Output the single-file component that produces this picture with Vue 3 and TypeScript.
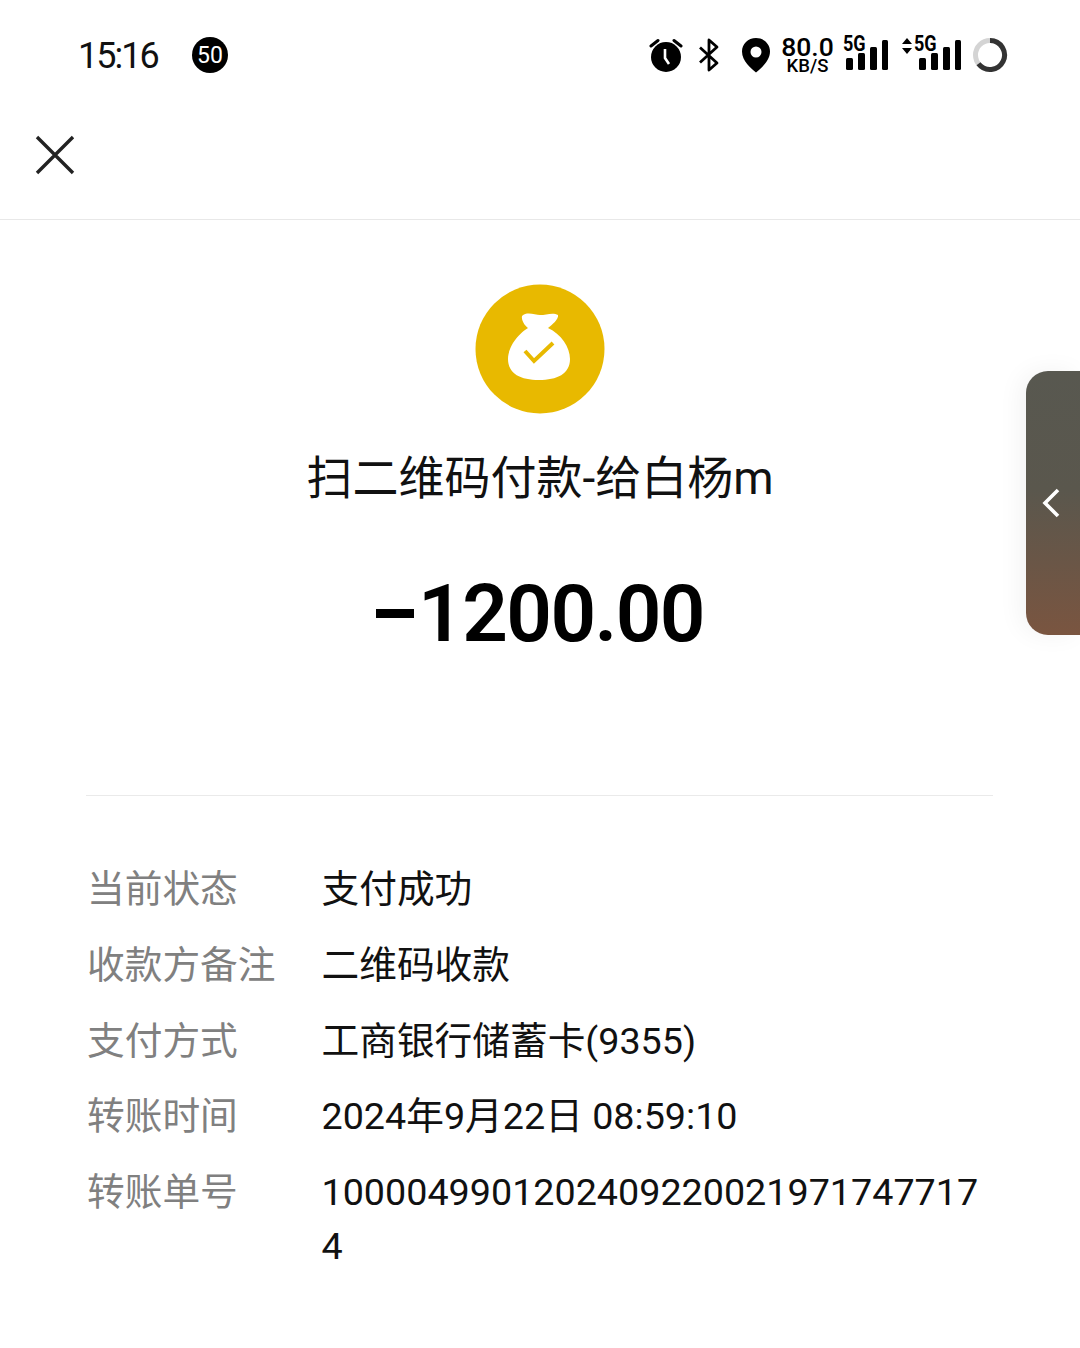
<script setup lang="ts">
interface Row { label: string; value: string }
const rows: Row[] = [
  { label: '当前状态', value: '支付成功' },
  { label: '收款方备注', value: '二维码收款' },
  { label: '支付方式', value: '工商银行储蓄卡(9355)' },
  { label: '转账时间', value: '2024年9月22日 08:59:10' },
  { label: '转账单号', value: '10000499012024092200219717477174' },
]
</script>

<template>
  <div class="page">
    <div class="status">
      <span class="time">15:16</span>
      <span class="badge">50</span>
      <div class="icons">
        <svg class="ic-alarm" width="34" height="36" viewBox="0 0 34 36">
          <circle cx="17" cy="20" r="15" fill="#000" />
          <path d="M2 9 9 3.500M32 9 25 3.500" stroke="#000" stroke-width="3" stroke-linecap="round" fill="none" />
          <path d="M16 12v9l4 6" stroke="#fff" stroke-width="2.600" fill="none" />
        </svg>
        <svg class="ic-bt" width="22" height="34" viewBox="0 0 22 34">
          <path d="M2 9.500 19 25l-8 7V2l8 7L2 24.500" stroke="#000" stroke-width="2.800" fill="none" stroke-linejoin="round" />
        </svg>
        <svg class="ic-pin" width="30" height="36" viewBox="0 0 30 36">
          <path fill-rule="evenodd" d="M15 1C7 1 1 7 1 14.500 1 24 10 31 15 35.500 20 31 29 24 29 14.500 29 7 23 1 15 1Zm0 8.500a5.500 5.500 0 1 1 0 11 5.500 5.500 0 0 1 0-11Z" fill="#000" />
        </svg>
        <div class="speed"><span class="speed-num">80.0</span><span class="speed-unit">KB/S</span></div>
        <div class="signal">
          <span class="net">5G</span>
          <svg width="46" height="30" viewBox="0 0 46 30">
            <rect x="3" y="18" width="7" height="12" rx="1.500" />
            <rect x="15" y="13" width="7" height="17" rx="1.500" />
            <rect x="27" y="7" width="7" height="23" rx="1.500" />
            <rect x="39" y="0" width="6" height="30" rx="1.500" />
          </svg>
        </div>
        <div class="signal signal-b">
          <svg class="arrows" width="12" height="16" viewBox="0 0 12 16">
            <path d="M6 0l5 6H1ZM6 16l5-6H1Z" />
          </svg>
          <span class="net">5G</span>
          <svg width="46" height="30" viewBox="0 0 46 30">
            <rect x="3" y="18" width="7" height="12" rx="1.500" />
            <rect x="15" y="13" width="7" height="17" rx="1.500" />
            <rect x="27" y="7" width="7" height="23" rx="1.500" />
            <rect x="39" y="0" width="6" height="30" rx="1.500" />
          </svg>
        </div>
        <svg class="ic-ring" width="36" height="36" viewBox="0 0 36 36">
          <circle cx="18" cy="18" r="14.500" fill="none" stroke="#d4d4d4" stroke-width="5" />
          <path d="M18 3.500A14.500 14.500 0 1 1 6.500 26.800" fill="none" stroke="#333" stroke-width="5" />
        </svg>
      </div>
    </div>

    <header class="nav">
      <svg width="40" height="40" viewBox="0 0 40 40">
        <path d="M2 2l36 36M38 2 2 38" stroke="#222" stroke-width="3.400" fill="none" />
      </svg>
    </header>

    <section class="summary">
      <svg class="bag" width="130" height="130" viewBox="0 0 130 130">
        <circle cx="65" cy="65" r="64.500" fill="#e8b900" />
        <path d="M47 32C52 27 60 31 65 31 71 31 78 28 83 31 84 35 77 41 73 44 86 50 95 63 95 75 95 90 82 96 64 96 46 96 33 90 33 75 33 63 43 50 53 44 50 42 46 36 47 32Z" fill="#fff" />
        <path d="M50 67l9 10 19-18" stroke="#e8b900" stroke-width="4" fill="none" />
      </svg>
      <h1 class="title">扫二维码付款-给白杨m</h1>
      <div class="amount"><span class="minus"></span>1200.00</div>
    </section>

    <div class="rule"></div>

    <section class="details">
      <div v-for="row in rows" :key="row.label" class="row">
        <span class="label">{{ row.label }}</span>
        <span class="value">{{ row.value }}</span>
      </div>
    </section>

    <aside class="tab">
      <svg width="18" height="30" viewBox="0 0 18 30">
        <path d="M16 2 3 15l13 13" stroke="#fff" stroke-width="3.600" fill="none" />
      </svg>
    </aside>
  </div>
</template>

<style>
html, body { margin: 0; background: #fff; }
</style>

<style scoped>
.page {
  position: relative;
  width: 1080px;
  height: 1348px;
  overflow: hidden;
  background: #fff;
  color: #000;
  font-family: Roboto, "Noto Sans CJK SC", sans-serif;
}
.status {
  height: 110px;
  box-sizing: border-box;
  padding: 0 72px 0 78px;
  display: flex;
  align-items: center;
}
.time { font-size: 36px; letter-spacing: -2px; width: 114px; color: #111; line-height: 40px; padding-top: 2px; }
.badge {
  width: 36px; height: 36px; border-radius: 50%;
  background: #000; color: #fff;
  font-size: 23px;
  display: flex; align-items: center; justify-content: center;
}
.icons { margin-left: auto; display: flex; align-items: center; }
.ic-bt { margin-left: 15px; }
.ic-pin { margin-left: 21px; }
.speed { margin-left: 11px; display: flex; flex-direction: column; align-items: center; width: 51px; line-height: 1; font-weight: 500; }
.speed-num { font-size: 26.500px; height: 21px; line-height: 21px; }
.speed-unit { font-size: 18.500px; height: 18px; line-height: 18px; }
.signal { position: relative; display: flex; align-items: flex-end; height: 36px; box-sizing: border-box; padding-bottom: 3px; margin-left: 10px; }
.signal svg { fill: #000; display: block; }
.net { font-size: 22px; font-weight: 700; position: absolute; left: 0; top: -3px; line-height: 20px; transform: scaleX(.82); transform-origin: left; }
.signal-b { margin-left: 12px; width: 61px; }
.signal-b .arrows { position: absolute; left: 0; top: 1px; }
.signal-b .net { left: 13px; }
.signal-b svg:last-child { position: absolute; left: 15px; bottom: 3px; }
.ic-ring { margin-left: 10px; margin-top: -1px; }
.nav {
  height: 109px;
  border-bottom: 1px solid #e8e8e8;
  padding-left: 35px;
  display: flex;
  align-items: center;
}
.nav svg { margin-top: -20px; }
.summary { display: flex; flex-direction: column; align-items: center; padding-top: 64px; }
.bag { display: block; }
.title { margin: 35px 0 0; font-size: 46px; font-weight: 400; line-height: 58px; color: #111; }
.amount { margin-top: 59px; font-size: 80px; font-weight: 600; line-height: 96px; letter-spacing: -1.600px; display: flex; align-items: center; }
.minus { width: 38px; height: 9px; margin-right: 4px; background: #000; margin-top: -2px; }
.rule { margin: 133px 87px 0 86px; height: 1px; background: #eaeaea; }
.details { padding: 66px 90px 0 87px; }
.row { display: flex; margin-bottom: 21.800px; font-size: 37.700px; line-height: 54px; }
.label { width: 234.500px; flex: none; color: #808080; }
.value { flex: 1; word-break: break-all; color: #111; }
.tab {
  position: absolute;
  left: 1026px; top: 371px;
  width: 54px; height: 264px;
  box-sizing: border-box;
  border-radius: 22px 0 0 22px;
  background: linear-gradient(180deg, #585850 0%, #5a574d 45%, #7a5540 100%);
  box-shadow: -6px 0 24px rgba(0,0,0,.05);
  display: flex; align-items: center;
  padding-left: 16px;
}
</style>
